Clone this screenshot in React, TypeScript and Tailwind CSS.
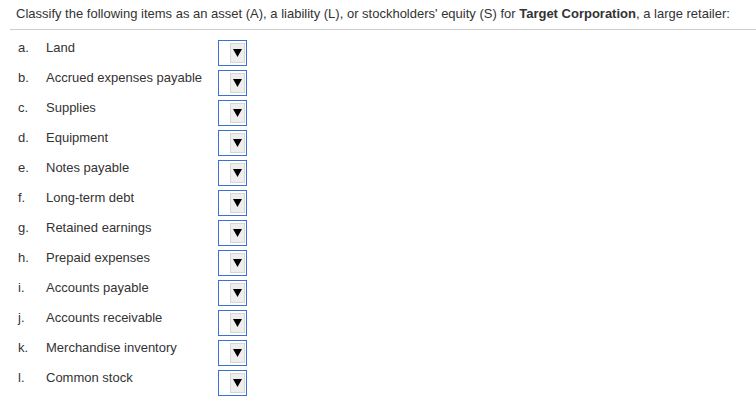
import React from "react";

const items = [
  ["a.", "Land"],
  ["b.", "Accrued expenses payable"],
  ["c.", "Supplies"],
  ["d.", "Equipment"],
  ["e.", "Notes payable"],
  ["f.", "Long-term debt"],
  ["g.", "Retained earnings"],
  ["h.", "Prepaid expenses"],
  ["i.", "Accounts payable"],
  ["j.", "Accounts receivable"],
  ["k.", "Merchandise inventory"],
  ["l.", "Common stock"],
];

export default function App() {
  return (
    <div className="w-[756px] h-[408px] bg-white text-[#333] text-[13px] overflow-hidden" style={{ fontFamily: '"Liberation Sans", Arial, sans-serif' }}>
      <div className="ml-[10px] border-b border-[#ccc] h-[30px] pl-[6px] pt-[6px] leading-[16px]">
        Classify the following items as an asset (A), a liability (L), or stockholders' equity (S) for{" "}
        <span className="font-bold">Target Corporation</span>, a large retailer:
      </div>
      <div className="pt-[10px]">
        {items.map(([k, v]) => (
          <div key={k} className="flex h-[30px]">
            <div className="w-[46px] pl-[18px] pt-[1px] leading-[14px]">{k}</div>
            <div className="w-[172px] pt-[1px] leading-[14px]">{v}</div>
            <div className="w-[29px] h-[26px] border border-[#3a6fd8] flex items-center justify-end pr-[1px]">
              <div className="w-[15px] h-[20px] bg-[#eeeeee] border border-[#d6d6d6] flex items-center justify-center">
                <svg width="9" height="8" viewBox="0 0 9 8"><path d="M0 0 L9 0 L4.5 8 Z" fill="#000" /></svg>
              </div>
            </div>
          </div>
        ))}
      </div>
    </div>
  );
}
